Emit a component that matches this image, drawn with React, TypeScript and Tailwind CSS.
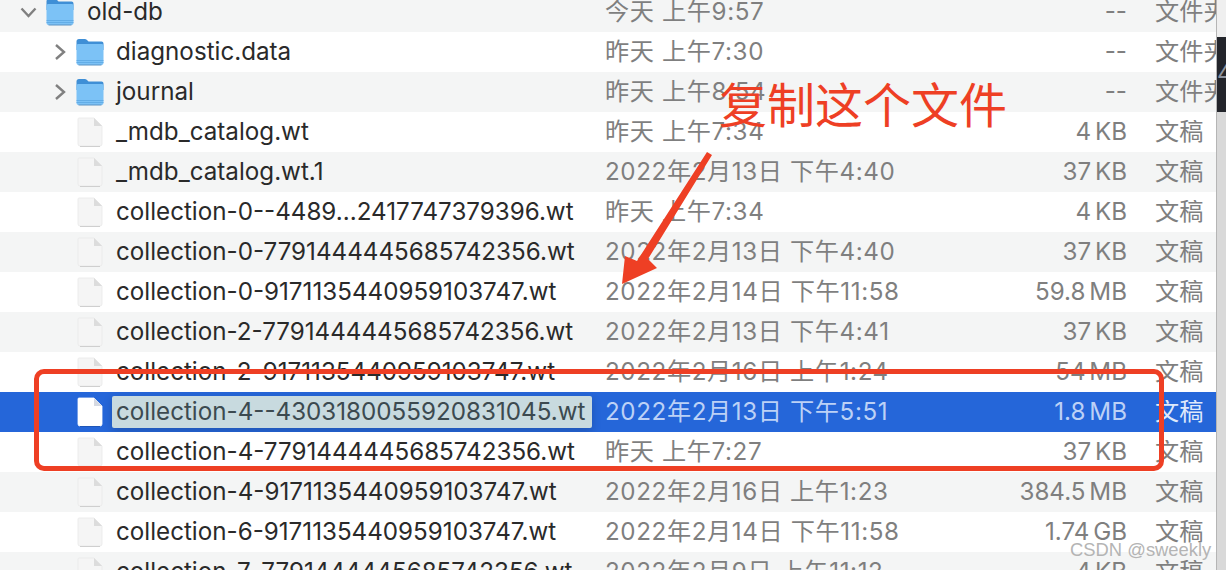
import React from "react";

type Row = {
  name: string;
  date: string;
  size: string;
  kind: string;
  icon: "open" | "folder" | "file";
  selected?: boolean;
};

const rows: Row[] = [
  { name: "old-db", date: "今天 上午9:57", size: "--", kind: "文件夹", icon: "open" },
  { name: "diagnostic.data", date: "昨天 上午7:30", size: "--", kind: "文件夹", icon: "folder" },
  { name: "journal", date: "昨天 上午8:54", size: "--", kind: "文件夹", icon: "folder" },
  { name: "_mdb_catalog.wt", date: "昨天 上午7:34", size: "4 KB", kind: "文稿", icon: "file" },
  { name: "_mdb_catalog.wt.1", date: "2022年2月13日 下午4:40", size: "37 KB", kind: "文稿", icon: "file" },
  { name: "collection-0--4489...2417747379396.wt", date: "昨天 上午7:34", size: "4 KB", kind: "文稿", icon: "file" },
  { name: "collection-0-7791444445685742356.wt", date: "2022年2月13日 下午4:40", size: "37 KB", kind: "文稿", icon: "file" },
  { name: "collection-0-9171135440959103747.wt", date: "2022年2月14日 下午11:58", size: "59.8 MB", kind: "文稿", icon: "file" },
  { name: "collection-2-7791444445685742356.wt", date: "2022年2月13日 下午4:41", size: "37 KB", kind: "文稿", icon: "file" },
  { name: "collection-2-9171135440959103747.wt", date: "2022年2月16日 上午1:24", size: "54 MB", kind: "文稿", icon: "file" },
  { name: "collection-4--4303180055920831045.wt", date: "2022年2月13日 下午5:51", size: "1.8 MB", kind: "文稿", icon: "file", selected: true },
  { name: "collection-4-7791444445685742356.wt", date: "昨天 上午7:27", size: "37 KB", kind: "文稿", icon: "file" },
  { name: "collection-4-9171135440959103747.wt", date: "2022年2月16日 上午1:23", size: "384.5 MB", kind: "文稿", icon: "file" },
  { name: "collection-6-9171135440959103747.wt", date: "2022年2月14日 下午11:58", size: "1.74 GB", kind: "文稿", icon: "file" },
  { name: "collection-7-7791444445685742356.wt", date: "2022年2月9日 上午11:12", size: "4 KB", kind: "文稿", icon: "file" },
];

const FolderIcon = () => (
  <svg width="28" height="28" viewBox="0 0 28 28">
    <path d="M0.5 3.5 Q0.5 1 3 1 H9 Q10.5 1 11.5 2.5 L12.5 3.5 H25.5 Q27.5 3.5 27.5 5.5 V12 H0.5 Z" fill="#3f8fd6" />
    <path d="M0.5 7.5 Q0.5 6 2 6 H26 Q27.5 6 27.5 7.5 V25 Q27.5 27 25.5 27 H2.5 Q0.5 27 0.5 25 Z" fill="#7cc2f6" />
    <path d="M0.5 22.5 H27.5 M0.5 24.5 H27.5" stroke="#5da7e3" strokeWidth="0.8" />
    <path d="M2.5 27 H25.5" stroke="#5b93c4" strokeWidth="1" />
  </svg>
);

const FileIcon = ({ selected }: { selected?: boolean }) => (
  <svg width="26" height="30" viewBox="0 0 26 30">
    <path
      d="M1 2 Q1 1 2 1 H17 L25 9 V27 Q25 29 23 29 H3 Q1 29 1 27 Z"
      fill={selected ? "#ffffff" : "#f5f5f5"}
      stroke={selected ? "#ffffff" : "#e8e8e8"}
      strokeWidth="0.8"
    />
    <path d="M17 1 V9 H25 Z" fill={selected ? "#d5d9e2" : "#dcdcdc"} />
    <path d="M3 29.5 H23" stroke={selected ? "#1f56b8" : "#cfcfcf"} strokeWidth="1" />
  </svg>
);

const ChevronRight = () => (
  <svg width="12" height="18" viewBox="0 0 12 18" fill="none">
    <path d="M2 2 L10 9 L2 16" stroke="#808080" strokeWidth="2.4" />
  </svg>
);

const ChevronDown = () => (
  <svg width="17" height="11" viewBox="0 0 17 11" fill="none">
    <path d="M1.5 1.5 L8.5 9 L15.5 1.5" stroke="#808080" strokeWidth="2.4" />
  </svg>
);

const FileRow = ({ row, index }: { row: Row; index: number }) => {
  const bg = row.selected ? "bg-[#2566d9]" : index % 2 === 0 ? "bg-[#f4f5f5]" : "bg-white";
  return (
    <div className={`flex h-10 shrink-0 items-center ${bg}`}>
      <div className="flex w-[605px] shrink-0 items-center">
        {row.icon === "open" ? (
          <div className="ml-[20px] flex w-[26px] items-center">
            <ChevronDown />
          </div>
        ) : (
          <div className="ml-[54px] flex w-[22px] items-center">{row.icon === "folder" && <ChevronRight />}</div>
        )}
        <div className="flex w-[28px] justify-center">
          {row.icon === "file" ? <FileIcon selected={row.selected} /> : <FolderIcon />}
        </div>
        {row.selected ? (
          <span className="ml-[8px] rounded-[2px] bg-[#c8dadf] py-[4px] pl-[4px] pr-[7px] text-[#3c4a50] shadow-[0_3px_10px_rgba(0,0,0,0.18)]">
            {row.name}
          </span>
        ) : (
          <span className={row.icon === "open" ? "ml-[13px] text-[#2a2a2a]" : "ml-[12px] text-[#2a2a2a]"}>{row.name}</span>
        )}
      </div>
      <div className={`w-[380px] shrink-0 whitespace-nowrap tracking-[0.6px] ${row.selected ? "text-[#bcd1f6]" : "text-[#7f7f7f]"}`}>
        {row.date}
      </div>
      <div className={`w-[142px] shrink-0 whitespace-nowrap text-right [word-spacing:-3px] ${row.selected ? "text-[#bcd1f6]" : "text-[#7f7f7f]"}`}>
        {row.size}
      </div>
      <div className={`ml-[28px] min-w-0 flex-1 overflow-hidden whitespace-nowrap ${row.selected ? "text-[#dfe9fb]" : "text-[#7f7f7f]"}`}>
        {row.kind}
      </div>
    </div>
  );
};

export default function App() {
  return (
    <div className="relative flex h-[570px] w-[1226px] overflow-hidden bg-white font-['Inter','Noto_Sans_CJK_SC',sans-serif] text-[24.2px] leading-none">
      <div className="-mt-2 flex min-w-0 flex-1 flex-col">
        {rows.map((row, i) => (
          <FileRow key={row.name} row={row} index={i} />
        ))}
      </div>

      {/* strip of the window behind */}
      <div className="flex h-full w-[10px] shrink-0 flex-col overflow-hidden border-l border-[#b5b5b5] bg-[#d9d9d9]">
        <div className="h-[37px] bg-[#efefef]" />
        <div className="flex h-[75px] items-center bg-[#23252b] text-[#8d939e]">4</div>
      </div>

      {/* annotations */}
      <div className="absolute left-[34px] top-[369px] h-[102px] w-[1130px] rounded-[10px] border-[5px] border-[#ee3f24]" />
      <div className="absolute left-[719px] top-[77px] whitespace-nowrap font-['Noto_Sans_CJK_SC',sans-serif] text-[48px] font-normal leading-[50px] text-[#ee3f24]">
        复制这个文件
      </div>
      <svg className="absolute left-[615px] top-[145px]" width="105" height="145" viewBox="615 145 105 145">
        <path d="M707 152 L712 155 L648 259 L657 268 L622 284 L625 256 L637 261 Z" fill="#ee3f24" />
      </svg>
      <div className="absolute left-[1070px] top-[540px] whitespace-nowrap font-['Liberation_Sans',sans-serif] text-[18.4px] leading-[20px] text-[#b4b4b4]">
        CSDN @sweekly
      </div>
    </div>
  );
}
